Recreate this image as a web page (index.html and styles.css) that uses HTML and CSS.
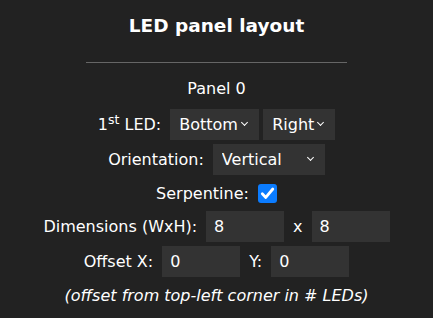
FILE: index.html
```html
<!DOCTYPE html>
<html lang="en">
<head>
  <meta charset="UTF-8">
  <title>LED panel layout</title>
  <link rel="stylesheet" href="styles.css">
</head>
<body>

  <div class="painel">
    <h2 class="titulo">LED panel layout</h2>
    <hr class="linha">
    <div class="nome">Panel 0</div>

    <div class="campos">
      <div class="linha-campo">
        <span>1<sup>st</sup> LED:</span>
        <div class="grupo">
          <label class="seletor largura-bottom">
            <select><option>Bottom</option><option>Top</option></select>
          </label>
          <label class="seletor largura-right">
            <select><option>Right</option><option>Left</option></select>
          </label>
        </div>
      </div>

      <div class="linha-campo">
        <span>Orientation:</span>
        <label class="seletor largura-orient">
          <select><option>Vertical</option><option>Horizontal</option></select>
        </label>
      </div>

      <div class="linha-campo curta">
        <span>Serpentine:</span>
        <span class="caixa">
          <svg width="19" height="19" viewBox="0 0 19 19">
            <rect x="0" y="0" width="19" height="19" rx="3" fill="#0b7cff"/>
            <path d="M4.3 9.8 L7.8 13.4 L14.8 5" fill="none" stroke="#fff" stroke-width="2.8" stroke-linecap="round" stroke-linejoin="round"/>
          </svg>
        </span>
      </div>

      <div class="linha-campo">
        <span>Dimensions (WxH):</span>
        <input class="numero" type="text" value="8">
        <span>x</span>
        <input class="numero" type="text" value="8">
      </div>

      <div class="linha-campo">
        <span>Offset X:</span>
        <input class="numero" type="text" value="0">
        <span>Y:</span>
        <input class="numero" type="text" value="0">
      </div>
    </div>

    <div class="nota">(offset from top-left corner in # LEDs)</div>
  </div>

</body>
</html>
```

FILE: styles.css
```css
body {
  margin: 0;
  background-color: #222;
  color: #fff;
  font-family: "DejaVu Sans", Verdana, sans-serif;
  font-size: 16px;
}

.painel {
  display: flex;
  flex-direction: column;
  align-items: center;
  text-align: center;
}

.titulo {
  font-size: 18.5px;
  line-height: 24px;
  margin: 14px 0 0;
}

.linha {
  width: 261px;
  border: none;
  border-top: 1px solid #666;
  margin: 24px 0 0;
}

.nome {
  line-height: 18px;
  margin-top: 17px;
}

.campos {
  display: flex;
  flex-direction: column;
  gap: 4px;
  margin-top: 11px;
}

.linha-campo {
  display: flex;
  justify-content: center;
  align-items: center;
  gap: 9px;
  height: 31px;
}

.linha-campo.curta {
  height: 28px;
}

sup {
  font-size: 12.5px;
  line-height: 0;
  vertical-align: 6px;
}

.grupo {
  display: flex;
  gap: 4px;
}

.seletor {
  position: relative;
  display: block;
  height: 31px;
  background: #333;
}

.seletor select {
  appearance: none;
  -webkit-appearance: none;
  width: 100%;
  height: 100%;
  border: none;
  outline: none;
  background: transparent;
  color: #fff;
  font: inherit;
  padding: 0 0 0 9px;
  margin: 0;
}

.seletor::after {
  content: "";
  position: absolute;
  top: 11px;
  right: 12px;
  width: 4px;
  height: 4px;
  border-right: 1.5px solid #fff;
  border-bottom: 1.5px solid #fff;
  transform: rotate(45deg);
  pointer-events: none;
}

.largura-bottom { width: 89px; }
.largura-right { width: 72px; }
.largura-orient { width: 112px; }

.caixa {
  display: flex;
  width: 19px;
  height: 19px;
}

.numero {
  box-sizing: border-box;
  width: 78px;
  height: 31px;
  border: none;
  outline: none;
  background: #333;
  color: #fff;
  font: inherit;
  padding: 0 8px;
  margin: 0;
}

.nota {
  font-style: italic;
  line-height: 18px;
  margin-top: 10px;
}
```
